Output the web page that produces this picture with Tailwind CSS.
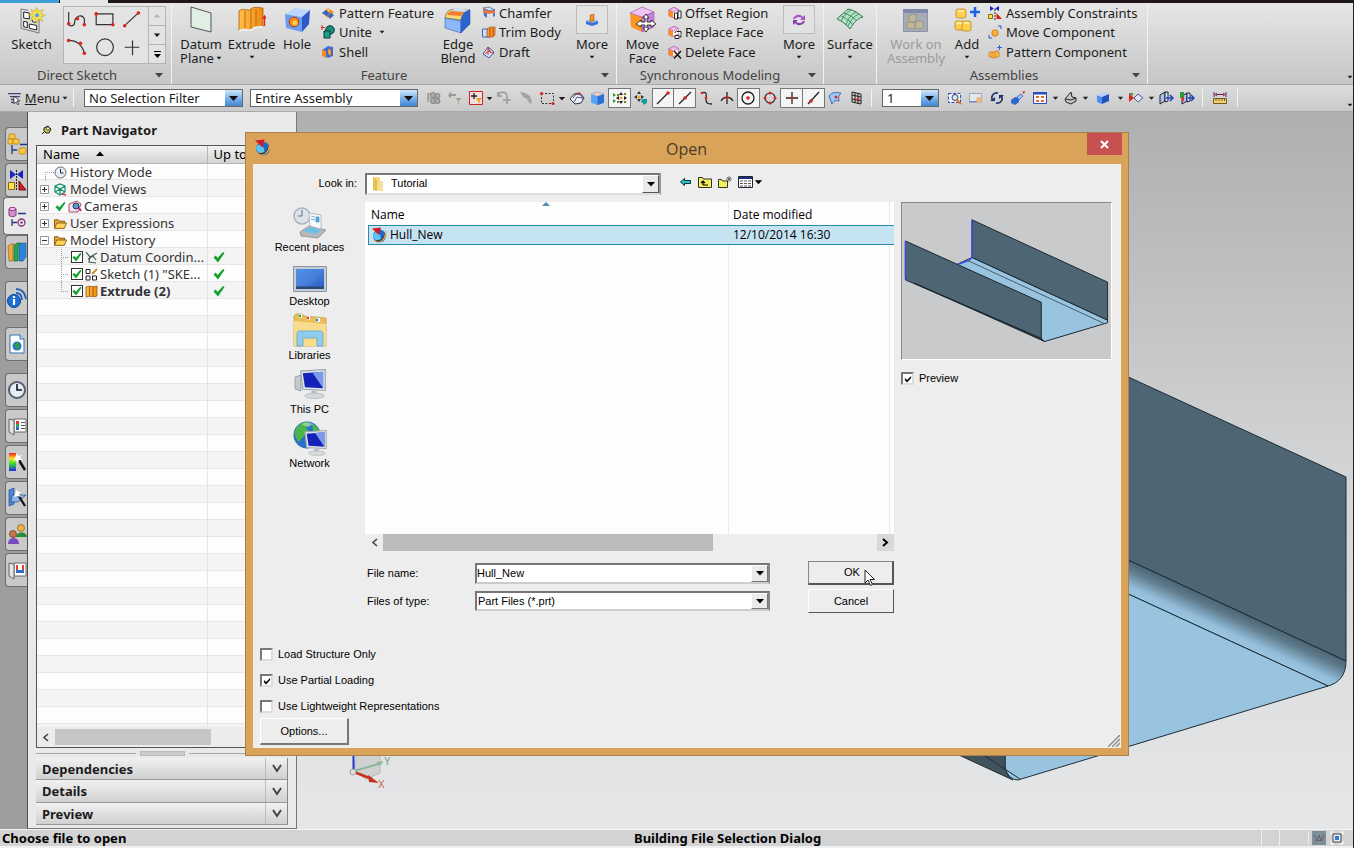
<!DOCTYPE html>
<html lang="en">
<head>
<meta charset="utf-8">
<title>Open</title>
<script src="https://cdn.jsdelivr.net/npm/@tailwindcss/browser@4"></script>
</head>
<body class="font-['Noto_Sans','Open_Sans',sans-serif] text-[13px] leading-[14px] text-[#1c1c1c]">
<svg class="absolute h-0 w-0" aria-hidden="true">
  <linearGradient id="gOrange" x1="0" x2="1"><stop offset="0" stop-color="#ffc04a"/><stop offset="1" stop-color="#f08a10"/></linearGradient>
  <linearGradient id="gBlue" x1="0" x2="1" y2="1"><stop offset="0" stop-color="#6fa8f2"/><stop offset="1" stop-color="#2458c4"/></linearGradient>
  <linearGradient id="gRain" x1="0" x2="0" y1="0" y2="1"><stop offset="0" stop-color="#e22"/><stop offset=".3" stop-color="#fd2"/><stop offset=".6" stop-color="#3d3"/><stop offset="1" stop-color="#22d"/></linearGradient>
  <linearGradient id="gArrow" x1="0" x2="0" y1="0" y2="1"><stop offset="0" stop-color="#cfe6fb"/><stop offset=".5" stop-color="#7db4ea"/><stop offset="1" stop-color="#3f86d2"/></linearGradient>
  <symbol id="down" viewBox="0 0 10 6"><path d="M1 1h8L5 5.500z" fill="currentColor"/></symbol>
  <symbol id="tick" viewBox="0 0 12 12"><path d="M.5 6.500 2.800 4.600 4.600 7 10 1 11.500 2 5 11.500z" fill="#12a12c"/></symbol>
  <symbol id="tickBlack" viewBox="0 0 9 9"><path d="M1 3.500v2.500l2.500 2.500L8 3.500V1L3.500 5.700z" fill="#000"/></symbol>
  <symbol id="folder" viewBox="0 0 14 13"><path d="M.5 11.500V2.500h4l1.500 1.500h5.500v2" fill="#e9a92c" stroke="#7a5310"/><path d="M.5 11.800 3 6h10.600l-2.600 5.800z" fill="#ffd35c" stroke="#8a5d10"/></symbol>
  <symbol id="nx" viewBox="0 0 17 17"><circle cx="8.500" cy="9" r="6.500" fill="#2068c8"/><path d="M2 8c2-4 5-4 7 0l1 5C5 14 2 12 2 8z" fill="#5cc6f2"/><path d="M2 12.500c6 2 12-1 13-9.500 2 6-2 12-8 12.500-2 0-4-1-5-3z" fill="#f0a62a"/><path d="M4 13c5 1 8-2 9.500-6 0 5-4 8-8 7.500z" fill="#173a78"/><path d="M1 1.500 10 .5 8 8z" fill="#d11b25"/></symbol>
  <symbol id="cube" viewBox="0 0 14 14"><path d="M1 4 6 6v7L1 11z" fill="#4f8ef0"/><path d="M1 4 8 1l5 2-7 3z" fill="#b5d5ff"/><path d="M6 6l7-3v7l-7 3z" fill="#2452bd"/></symbol>
  <symbol id="face" viewBox="0 0 14 14"><path d="M1 4 7 1l5 2.500V10l-6 3-5-2z" fill="#fff" stroke="#b0459b" stroke-width=".8"/><path d="M1 4l5 2.500V13L1 11z" fill="#ff8c1a"/><path d="M1 4 7 1l5 2.500-6 3z" fill="#f1c0ee" stroke="#b0459b" stroke-width=".6"/></symbol>
  <symbol id="monitor" viewBox="1 0 24 28"><path d="M1 2 24 .5v19.500L3 19z" fill="#dfe5ea" stroke="#9aa3ab"/><path d="M3 4 22 2.500v15.500L5 17z" fill="#1422b8"/><path d="M12 3.300l10-.8v15.500z" fill="#7d9bec"/><path d="M11 20h5v4h-5z" fill="#b9c0c6"/><ellipse cx="14" cy="25" rx="9" ry="2.500" fill="#d5dadd" stroke="#a7adb2" stroke-width=".6"/></symbol>
</svg>

<div class="flex h-screen min-h-[600px] w-full flex-col overflow-hidden border-r border-[#222] bg-[#d6d6d6]">
  <div class="flex h-[3px] shrink-0 bg-[#1d1718]"><span class="w-[59px] bg-[#3d9fd3]"></span><span class="w-px bg-black"></span><span class="w-[48px] bg-[#e6e6e6]"></span></div>

  <!-- Ribbon -->
  <header class="flex h-[81px] shrink-0 bg-linear-to-b from-[#e6e6e6] to-[#c6c6c6]">
    <section class="flex w-[171px] shrink-0 flex-col">
      <div class="flex h-[64px]">
        <button class="flex w-[63px] flex-col items-center gap-[3px] pt-[3px]">
          <svg class="h-7 w-[28px]" viewBox="0 0 84 84"><path d="M9 9 31 13M9 9v58l54 14V36" fill="none" stroke="#777" stroke-width="3"/><path d="M17 18l17 3v18l-17-3zM43 34l12 2v13l-12-2zM17 46l11 2v17l-11-3zM34 54l22 4v14l-22-5z" fill="#fff" stroke="#222" stroke-width="3"/><path d="M56 4l5 13 14-6-6 13 13 4-13 5 5 13-13-7-6 13-4-13-14 5 7-13-13-4 13-5-6-12 13 6z" fill="#f8e04a" stroke="#b89c18" stroke-width="1.500"/><circle cx="57" cy="28" r="6" fill="#4aa0ff"/></svg>
          <span>Sketch</span>
        </button>
        <div class="mt-[3px] flex h-[58px] w-[103px] border border-[#b4b4b4] bg-[#e3e3e3]">
          <svg class="h-[56px] w-[84px]" viewBox="0 0 84 57" fill="none" stroke="#333" stroke-width="1.200">
            <path d="M4 5v12c0 3 6 3 6-1 0-6 7-10 10-4v6"/><path d="M32 7h17v11H32z"/><path d="M62 18 75 6"/><path d="M4 34c9 0 14 6 16 13"/><circle cx="41" cy="41" r="8.500"/><path d="M69 34v15M61 41h15"/>
            <g fill="#e0231a" stroke="none"><circle cx="4" cy="17" r="1.800"/><circle cx="13" cy="12" r="1.800"/><circle cx="20" cy="18" r="1.800"/><circle cx="32" cy="7" r="1.800"/><circle cx="49" cy="18" r="1.800"/><circle cx="61" cy="19" r="1.800"/><circle cx="75" cy="6" r="1.800"/><circle cx="4" cy="34" r="1.800"/><circle cx="16" cy="37" r="1.800"/><circle cx="20" cy="47" r="1.800"/></g>
          </svg>
          <div class="flex flex-1 flex-col divide-y divide-[#b4b4b4] border-l border-[#b4b4b4]">
            <button class="grid flex-1 place-items-center text-[#b5b5b5]" aria-label="Up"><svg class="h-[6px] w-[8px] rotate-180"><use href="#down"/></svg></button>
            <button class="grid flex-1 place-items-center" aria-label="Down"><svg class="h-[6px] w-[8px]"><use href="#down"/></svg></button>
            <button class="grid flex-1 place-items-center" aria-label="More curves"><svg class="h-[9px] w-[9px]" viewBox="0 0 9 9"><path d="M1 1.500h7" stroke="#000"/><path d="M1 4h7L4.500 8z" fill="#000"/></svg></button>
          </div>
        </div>
      </div>
      <div class="flex h-4 items-center text-[#444]"><span class="flex-1 text-center">Direct Sketch</span><svg class="mr-[7px] h-[6px] w-[10px]"><use href="#down"/></svg></div>
    </section>
    <section class="flex w-[445px] shrink-0 flex-col border-l border-[#f2f2f2]">
      <div class="flex h-[64px]">
        <button class="flex w-[58px] flex-col items-center gap-[3px] pt-[3px]">
          <svg class="h-7 w-7" viewBox="0 0 28 28"><path d="M4 1 24 7v19L4 21z" fill="#e0efe4" stroke="#555"/></svg>
          <span class="flex flex-col items-center"><span>Datum</span><span class="flex items-center gap-[2px]">Plane<svg class="h-[4px] w-[6px]"><use href="#down"/></svg></span></span>
        </button>
        <button class="flex w-[43px] flex-col items-center gap-[3px] pt-[3px]">
          <svg class="h-7 w-[28px]" viewBox="0 0 28 28"><path d="M1 5c4-4 9 1 12-2s8-1 12-1v19c-4 0-8 0-10 2s-9-1-14 2z" fill="url(#gOrange)" stroke="#a85c08" stroke-width=".8"/><path d="M7 5v17M13 3v20M18 3v18" stroke="#b96a10" stroke-width="1" fill="none"/><path d="M1 25c5-3 11 1 14-2s6-2 10-2" stroke="#eee" stroke-width="2" fill="none"/><path d="M26.500 20V11M24.500 13l2-3 2 3" stroke="#d22" stroke-width="1.300" fill="none"/></svg>
          <span>Extrude</span><svg class="mt-[1px] h-[4px] w-[6px]"><use href="#down"/></svg>
        </button>
        <button class="flex w-[48px] flex-col items-center gap-[3px] pt-[3px]">
          <svg class="h-7 w-7" viewBox="0 0 28 28"><path d="M2 8 19 11v15L3 22z" fill="#6a9bf2"/><path d="M2 8 12 2l15 2-8 7z" fill="#bcd6ff"/><path d="M19 11l8-7-1 14-7 8z" fill="#3058c8"/><circle cx="11" cy="16" r="4.800" fill="#ff8a1a" stroke="#b23a10"/><circle cx="12" cy="17" r="2.500" fill="#ffd24a"/></svg>
          <span>Hole</span>
        </button>
        <div class="flex w-[114px] flex-col whitespace-nowrap">
          <button class="flex h-[19px] items-center gap-1"><svg class="h-[14px] w-[14px]" viewBox="0 0 14 14"><path d="M1 7l6-5 6 4-6 6z" fill="#f48b1d"/><path d="M1 7l4-3 4 3-3 3zM7 10l3-3 3 2-4 4z" fill="#2f66d0"/><path d="M6 2l3 1-2 4z" fill="#ffcb52"/></svg>Pattern Feature</button>
          <button class="flex h-5 items-center gap-1"><svg class="h-[14px] w-[14px]" viewBox="0 0 14 14"><circle cx="9" cy="5" r="4.300" fill="#159080" stroke="#0a3a36"/><path d="M3 6h6v7H3z" fill="#1aa08d" stroke="#0a3a36"/><path d="M1 0v5M0 2.500h4" stroke="#d22"/></svg>Unite<svg class="ml-[3px] h-[4px] w-[6px]"><use href="#down"/></svg></button>
          <button class="flex h-[19px] items-center gap-1"><svg class="h-[14px] w-[14px]" viewBox="0 0 14 14"><path d="M1 5l6-4 5 1v9l-5 2-6-3z" fill="#3c70dd"/><path d="M1 5l4 1v7l-4-2z" fill="#f48b1d"/><path d="M7 3l3 2v6l-3-2z" fill="#ffb23b" stroke="#8a3d08" stroke-width=".5"/></svg>Shell</button>
        </div>
        <button class="flex w-[46px] flex-col items-center gap-[3px] pt-[3px]">
          <svg class="h-7 w-7" viewBox="0 0 28 28"><path d="M1 12c1-7 4-8 10-9l15 1c-5 1-8 4-9 10z" fill="#ffd978" stroke="#333" stroke-width=".5"/><path d="M3 9c1-3 4-4 8-5l13 1c-4 1-6 3-7 5z" fill="#f08035"/><path d="M11 2l15 2-3 2-15-1z" fill="#cfe0ff"/><path d="M1 12l16 3v12L1 22z" fill="#8ab8f8" stroke="#264a9c" stroke-width=".5"/><path d="M17 15c1-7 4-10 9-11v14l-9 9z" fill="#2c65d0" stroke="#264a9c" stroke-width=".5"/></svg>
          <span class="text-center">Edge<br>Blend</span>
        </button>
        <div class="flex w-[90px] flex-col pl-px whitespace-nowrap">
          <button class="flex h-[19px] items-center gap-[3px]"><svg class="h-[14px] w-[14px]" viewBox="0 0 14 14"><path d="M1 3l6-2 6 3v6l-2 1V7L5 6v6l-3-2z" fill="#4979d8"/><path d="M1 3l6 2 6-1v3L6 8 1 6z" fill="#f07a3a"/><path d="M1 2l6-1 6 3-6 1z" fill="#cddffc" stroke="#335" stroke-width=".5"/></svg>Chamfer</button>
          <button class="flex h-5 items-center gap-[3px]"><svg class="h-[14px] w-[14px]" viewBox="0 0 14 14"><path d="M.5 4h7v8h-7z" fill="#cfe0fb" stroke="#3b64c0"/><path d="M5 4l3-2h5v8l-2 2H5z" fill="#f6a22e" stroke="#a8480e" stroke-width=".7"/><path d="M8 3v9M11 3v8" stroke="#c03a20"/></svg>Trim Body</button>
          <button class="flex h-[19px] items-center gap-[3px]"><svg class="h-[14px] w-[14px]" viewBox="0 0 14 14"><path d="M1 9l5-7 6 5-5 6z" fill="#dfe7fb" stroke="#3b55a8"/><path d="M6 2v8M3 9l4-3 5 3M6 3l3 5" stroke="#c8322b" fill="none"/></svg>Draft</button>
        </div>
        <button class="flex w-[42px] flex-col items-center gap-[3px] pt-[2px]">
          <span class="grid h-[29px] w-[32px] place-items-center border border-[#bdbdbd] bg-[#e2e2e2]"><svg class="h-[14px] w-[14px]" viewBox="0 0 14 14"><path d="M1 8l6-2 6 2v3l-6 2-6-2z" fill="#3a6fd8"/><path d="M1 8l6-2 6 2-6 2z" fill="#9cc4ff"/><path d="M5 2l4-1v7l-4 1z" fill="#f09224" stroke="#9c4f08" stroke-width=".5"/></svg></span>
          <span>More</span><svg class="mt-[1px] h-[4px] w-[6px]"><use href="#down"/></svg>
        </button>
      </div>
      <div class="flex h-4 items-center text-[#444]"><span class="flex-1 pr-1 text-center">Feature</span><svg class="mr-[6px] h-[6px] w-[10px]"><use href="#down"/></svg></div>
    </section>
    <section class="flex w-[207px] shrink-0 flex-col border-l border-[#f2f2f2]">
      <div class="flex h-[64px]">
        <button class="flex w-[51px] flex-col items-center gap-[3px] pt-[3px]">
          <svg class="h-7 w-7" viewBox="0 0 28 28"><path d="M1 7l12 4v15L2 21z" fill="#ff9624"/><path d="M1 7 13 1l12 5-12 5z" fill="#f0c4f2" stroke="#a04aa6" stroke-width=".6"/><path d="M13 11l12-5v15l-12 5z" fill="#c583dd" stroke="#8a3b9c" stroke-width=".5"/><path d="M17 8l3 4h-2v4h4v-2l5 4-5 3v-2h-4v3h2l-3 4-3-4h2v-3h-4v2l-5-3 5-4v2h4v-4h-2z" fill="#fff" stroke="#222" stroke-width=".9"/></svg>
          <span class="text-center">Move<br>Face</span>
        </button>
        <div class="flex w-[110px] flex-col whitespace-nowrap">
          <button class="flex h-[19px] items-center gap-[3px]"><svg class="h-[14px] w-[14px]" viewBox="0 0 14 14"><use href="#face" width="12" height="13"/><path d="M6.500 7v6h3V7zM10 5v7h3V5z" fill="#fff" stroke="#111" stroke-width=".9"/></svg>Offset Region</button>
          <button class="flex h-5 items-center gap-[3px]"><svg class="h-[14px] w-[14px]" viewBox="0 0 14 14"><use href="#face" width="12" height="13"/><path d="M7 10.500h4v3H7zM9 6.500h4v3M7 8c0-2 2-2 2-2M13 10v2h-1" fill="#fff" stroke="#111" stroke-width=".9"/></svg>Replace Face</button>
          <button class="flex h-[19px] items-center gap-[3px]"><svg class="h-[14px] w-[14px]" viewBox="0 0 14 14"><use href="#face" width="12" height="13"/><path d="M6 6l7 7.500M13 6l-7 7.500" stroke="#111" stroke-width="1.400"/></svg>Delete Face</button>
        </div>
        <button class="flex w-[42px] flex-col items-center gap-[3px] pt-[2px]">
          <span class="grid h-[29px] w-[32px] place-items-center border border-[#bdbdbd] bg-[#e2e2e2]"><svg class="h-[14px] w-[14px]" viewBox="0 0 14 14"><path d="M1 6c1-4 7-6 10-2l2-2v5H8l2-2C7 3 4 4 3 6z" fill="#a553c8"/><path d="M13 8c-1 4-7 6-10 2l-2 2V7h5L4 9c3 2 6 1 7-1z" fill="#8a3bb0"/></svg></span>
          <span>More</span><svg class="mt-[1px] h-[4px] w-[6px]"><use href="#down"/></svg>
        </button>
      </div>
      <div class="flex h-4 items-center text-[#444]"><span class="flex-1 whitespace-nowrap pr-1 text-center">Synchronous Modeling</span><svg class="mr-[6px] h-[6px] w-[10px]"><use href="#down"/></svg></div>
    </section>
    <section class="flex w-[53px] shrink-0 flex-col items-center border-l border-[#f2f2f2]">
      <button class="flex flex-col items-center gap-[3px] pt-[3px]">
        <svg class="h-7 w-7" viewBox="0 0 28 28"><path d="M1 13C5 9 9 6 12 3c6 1 10 4 15 8-5 1-9 5-13 12-3-4-8-8-13-10z" fill="#b4e2c6" stroke="#2b7a50"/><path d="M5 10c5 2 9 5 12 9M8 7c5 2 9 4 13 8M15 4C9 8 8 10 5 15M20 6c-5 3-8 6-10 13M23 8c-5 2-8 6-11 12" fill="none" stroke="#2b7a50" stroke-width=".8"/></svg>
        <span>Surface</span><svg class="mt-[1px] h-[4px] w-[6px]"><use href="#down"/></svg>
      </button>
    </section>
    <section class="flex w-[272px] shrink-0 flex-col border-x border-[#f2f2f2]">
      <div class="flex h-[64px]">
        <button class="flex w-[78px] flex-col items-center gap-[3px] pt-[3px] text-[#9a9a9a]">
          <svg class="h-7 w-[28px]" viewBox="0 0 28 28"><path d="M1.500 3.500h24v22h-24z" fill="#a7abb5" stroke="#8d94a6"/><path d="M1 3h25v4H1z" fill="#7e8aa8"/><path d="M7 10l4-2 3 1v6l-4 1-3-1zM5 17l4-1 4 1v5l-4 1-4-1zM13 16l4-1 4 1v6l-4 1-4-1z" fill="#c0b898" stroke="#8a8672" stroke-width=".6"/></svg>
          <span class="text-center">Work on<br>Assembly</span>
        </button>
        <button class="flex w-[24px] flex-col items-center gap-[3px] pt-[3px]">
          <svg class="h-7 w-7" viewBox="0 0 28 28"><g fill="#ffcf4f" stroke="#b97c10" stroke-width=".7"><rect x="3" y="3" width="10" height="9" rx="2"/><rect x="2" y="15" width="9" height="9" rx="2"/><rect x="9" y="15" width="9" height="10" rx="2"/></g><path d="M5 5h6M4 17h5M11 17h5" stroke="#fff3b8" stroke-width="1.500"/><path d="M22 1v10M17 6h10" stroke="#1c63e0" stroke-width="2.600"/></svg>
          <span>Add</span><svg class="mt-[1px] h-[4px] w-[6px]"><use href="#down"/></svg>
        </button>
        <div class="flex flex-1 flex-col whitespace-nowrap pl-[9px]">
          <button class="flex h-[19px] items-center gap-1"><svg class="h-[14px] w-[14px]" viewBox="0 0 14 14"><path d="M2 0v5l4-2.500zM11 0v5L7 2.500z" fill="#1426c8"/><path d="M7 3v11" stroke="#222" stroke-dasharray="2 1"/><path d="M.5 8.500h4v4h-4z" fill="#ffe04a" stroke="#86680c"/><path d="M8.500 7v6H14z" fill="#d81f1f"/></svg>Assembly Constraints</button>
          <button class="flex h-5 items-center gap-1"><svg class="h-[14px] w-[14px]" viewBox="0 0 14 14"><rect x="4" y="5" width="6" height="6" rx="2" fill="#ffae3d" stroke="#b36b10" stroke-width=".7"/><path d="M10 1h3v3M1 10v3h3" stroke="#2c55c8" fill="none"/></svg>Move Component</button>
          <button class="flex h-[19px] items-center gap-1"><svg class="h-[14px] w-[14px]" viewBox="0 0 14 14"><g fill="#ffb83d" stroke="#b36b10" stroke-width=".6"><rect x="1" y="7" width="4" height="5" rx="1"/><rect x="4" y="7" width="4" height="6" rx="1"/><rect x="7" y="6" width="4" height="6" rx="1"/></g><path d="M11.500 0v5M9 2.500h5" stroke="#2c63d0"/></svg>Pattern Component</button>
        </div>
      </div>
      <div class="flex h-4 items-center text-[#444]"><span class="flex-1 text-center">Assemblies</span><svg class="mr-[6px] h-[6px] w-[10px]"><use href="#down"/></svg></div>
    </section>
    <div class="flex flex-1 items-end justify-end pb-[5px]"><svg class="h-[4px] w-[6px]"><use href="#down"/></svg></div>
  </header>

  <!-- Selection bar -->
  <nav class="flex h-[28px] shrink-0 items-center border-y border-y-[#aaa] bg-linear-to-b from-[#dcdcdc] to-[#cacaca] pl-2">
    <button class="flex w-[60px] items-center gap-[4px]"><svg class="h-[13px] w-[13px]" viewBox="0 0 13 13"><path d="M0 1.500h13M2 4.500h10M3 7.500h3M3 10.500h3" stroke="#3b4a78" stroke-width="1.300"/><path d="M6 4v8l2-2 2 3 1-1-2-3h3z" fill="#fff" stroke="#222" stroke-width=".8"/></svg><span><u>M</u>enu</span><svg class="-ml-[2px] h-[4px] w-[6px]"><use href="#down"/></svg></button>
    <span class="ml-[5px] h-[18px] w-px bg-[#f4f4f4]"></span>
    <label class="ml-[10px] flex h-[18px] w-[159px] border border-[#666] bg-white"><select aria-label="Selection filter" class="min-w-0 flex-1 appearance-none bg-white pl-1 outline-none"><option>No Selection Filter</option></select><svg class="h-4 w-[17px]" viewBox="0 0 17 16"><path d="M0 0h17v16H0z" fill="url(#gArrow)"/><path d="M4 6h9l-4.500 5z" fill="#111"/></svg></label>
    <label class="ml-[7px] flex h-[18px] w-[168px] border border-[#666] bg-white"><select aria-label="Selection scope" class="min-w-0 flex-1 appearance-none bg-white pl-1 outline-none"><option>Entire Assembly</option></select><svg class="h-4 w-[17px]" viewBox="0 0 17 16"><path d="M0 0h17v16H0z" fill="url(#gArrow)"/><path d="M4 6h9l-4.500 5z" fill="#111"/></svg></label>
    <div class="ml-1 flex items-center">
      <button class="grid w-[22px] place-items-center" aria-label="Type filter"><svg class="h-4 w-4" viewBox="0 0 16 16" fill="#b0aea8" stroke="#8d8d8d" stroke-width="1.200"><path d="M3 3v9M3 8h3M3 4h3"/><circle cx="8" cy="5" r="2.500"/><circle cx="12.500" cy="6" r="2.300"/><circle cx="8" cy="11" r="2.500"/><circle cx="12.500" cy="11" r="2.300"/></svg></button>
      <button class="grid w-[22px] place-items-center" aria-label="Reset filter"><svg class="h-4 w-4" viewBox="0 0 16 16"><path d="M3 2 1 6l3 2V6h5V4H5z" fill="#999"/><path d="M8 8h7l-3 3v4l-1-1v-3z" fill="#a9a494"/></svg></button>
      <button class="grid w-[20px] place-items-center" aria-label="Snap filter"><svg class="h-4 w-4" viewBox="0 0 16 16"><path d="M1.500 1.500h13v13h-13z" fill="#f3dede" stroke="#c22"/><path d="M6 3v6M3 6h6" stroke="#222" stroke-width="1.300"/><path d="M8 8h6l-2.500 3v3L10 12v-1z" fill="#f39a1d"/></svg></button>
      <svg class="h-[5px] w-[7px]"><use href="#down"/></svg>
      <button class="grid w-[22px] place-items-center" aria-label="Undo selection"><svg class="h-4 w-4" viewBox="0 0 16 16" fill="none" stroke="#999" stroke-width="1.500"><path d="M2 6c1-5 8-5 9 0M2 2v4h4M11 6v8M7 10h8"/></svg></button>
      <button class="grid w-[22px] place-items-center" aria-label="Deselect"><svg class="h-4 w-4" viewBox="0 0 16 16"><path d="M2 2l5 1 5 3 2 6-2 2-3-5-4-2z" fill="#a3a3a3"/></svg></button>
      <button class="grid w-[20px] place-items-center" aria-label="Rectangle select"><svg class="h-4 w-4" viewBox="0 0 16 16"><path d="M2.500 3.500h12v10h-12z" fill="none" stroke="#333" stroke-dasharray="2 1.500"/><g fill="#d22"><circle cx="2.500" cy="3.500" r="1.600"/><circle cx="14" cy="13.500" r="1.600"/></g></svg></button>
      <svg class="h-[5px] w-[10px] px-px"><use href="#down"/></svg>
    </div>
    <div class="flex w-[299px] items-center">
      <button class="grid flex-1 place-items-center" aria-label="Shaded"><svg class="h-4 w-4" viewBox="0 0 16 16"><path d="M1 9 5 4l6-1 4 5-3 5-6 1z" fill="#e8eefb" stroke="#334"/><path d="M4 8l3-4 5 1 2 4M5 12l3-5 5 1" fill="none" stroke="#446" stroke-width=".9"/><path d="M6 5l3-2 3 1" stroke="#c33" fill="none"/></svg></button>
      <button class="grid flex-1 place-items-center" aria-label="Solid"><svg class="h-[15px] w-[15px]" viewBox="0 0 14 14"><path d="M1 3l6-2 6 2v8l-6 2-6-2z" fill="#5aa4f4"/><path d="M1 3l6-2 6 2-6 2z" fill="#f4cfc0" stroke="#8899bb" stroke-width=".5"/><path d="M7 5l6-2v8l-6 2z" fill="#2a6fd4"/></svg></button>
      <button class="grid h-5 flex-1 place-items-center border border-[#777] bg-[#f4f4f4]" aria-label="Enable snap"><svg class="h-4 w-4" viewBox="0 0 16 16"><path d="M1 3l3 2-3 2zM1 9l3 2-3 2z" fill="#2a9a3a"/><path d="M9 2l2 3H7zM9 14l2-3H7zM15 8l-3 2V6zM4 8l3-2v4z" fill="#222"/><circle cx="9" cy="8" r="1.500" fill="#e8b020"/><path d="M5 4h2v2H5zM12 3h2v2h-2zM12 11h2v2h-2zM5 11h2v2H5z" fill="#8a7a20"/></svg></button>
      <button class="grid flex-1 place-items-center" aria-label="Snap options"><svg class="h-4 w-4" viewBox="0 0 16 16"><path d="M6 1l2 3H4zM6 12l2-3H4zM11 7L8 9V5zM1 7l3-2v4z" fill="#333"/><circle cx="6" cy="7" r="1.500" fill="#e8b020"/><path d="M9 9h5v4l-4 2 0-2-2-1z" fill="#1a9a94"/></svg></button>
      <button class="grid h-5 flex-1 place-items-center border border-[#777] bg-[#f4f4f4]" aria-label="End point"><svg class="h-4 w-4" viewBox="0 0 16 16"><path d="M2 14 13 3" stroke="#222" stroke-width="1.300"/><circle cx="13" cy="3" r="1.800" fill="#d22"/></svg></button>
      <button class="grid h-5 flex-1 place-items-center border border-l-0 border-[#777] bg-[#f4f4f4]" aria-label="Mid point"><svg class="h-4 w-4" viewBox="0 0 16 16"><path d="M2 14 14 2" stroke="#222" stroke-width="1.300"/><circle cx="8" cy="8" r="1.800" fill="#d22"/></svg></button>
      <button class="grid flex-1 place-items-center" aria-label="Control point"><svg class="h-4 w-4" viewBox="0 0 16 16"><path d="M3 3c7-2 5 2 5 6s1 5 6 5" fill="none" stroke="#222" stroke-width="1.300"/><circle cx="4" cy="3" r="1.300" fill="#d22"/><circle cx="8" cy="8" r="1.300" fill="#d22"/></svg></button>
      <button class="grid flex-1 place-items-center" aria-label="Intersection"><svg class="h-4 w-4" viewBox="0 0 16 16"><path d="M8 2v12M2 11c3-5 9-5 12 0" fill="none" stroke="#222" stroke-width="1.300"/><circle cx="8" cy="7.500" r="1.600" fill="#d22"/></svg></button>
      <button class="grid h-5 flex-1 place-items-center border border-[#777] bg-[#f4f4f4]" aria-label="Arc center"><svg class="h-4 w-4" viewBox="0 0 16 16"><circle cx="8" cy="8" r="6" fill="none" stroke="#222" stroke-width="1.300"/><circle cx="8" cy="8" r="1.800" fill="#d22"/></svg></button>
      <button class="grid flex-1 place-items-center" aria-label="Quadrant"><svg class="h-4 w-4" viewBox="0 0 16 16"><circle cx="8" cy="8" r="5" fill="none" stroke="#333" stroke-width="1.200"/><g fill="#d22"><circle cx="8" cy="3" r="1.500"/><circle cx="8" cy="13" r="1.500"/><circle cx="3" cy="8" r="1.500"/><circle cx="13" cy="8" r="1.500"/></g></svg></button>
      <button class="grid h-5 flex-1 place-items-center border border-[#777] bg-[#f4f4f4]" aria-label="Existing point"><svg class="h-4 w-4" viewBox="0 0 16 16"><path d="M8 2v12M2 8h12" stroke="#222" stroke-width="1.300"/><circle cx="8" cy="8" r="1.300" fill="#d22"/></svg></button>
      <button class="grid h-5 flex-1 place-items-center border border-l-0 border-[#777] bg-[#f4f4f4]" aria-label="Point on curve"><svg class="h-4 w-4" viewBox="0 0 16 16"><path d="M3 14 14 2" stroke="#222" stroke-width="1.300"/><circle cx="6" cy="11" r="1.800" fill="#d22"/></svg></button>
      <button class="grid flex-1 place-items-center" aria-label="Point on surface"><svg class="h-4 w-4" viewBox="0 0 16 16"><path d="M2 6c3-4 7-4 12-3-2 2-3 4-2 8-4-1-5 0-7 3z" fill="#9cc8f4" stroke="#3a6ab0"/><circle cx="9" cy="7" r="1.500" fill="#d22"/></svg></button>
      <button class="grid flex-1 place-items-center" aria-label="Grid point"><svg class="h-4 w-4" viewBox="0 0 16 16"><path d="M4 2l9 2v10l-9-2zM7 3v10M10 3v11M4 5l9 2M4 9l9 2" fill="none" stroke="#222"/><circle cx="10" cy="9" r="1.500" fill="#d22"/></svg></button>
    </div>
    <span class="ml-[5px] h-[18px] w-px bg-[#f4f4f4]"></span>
    <label class="ml-[10px] flex h-[18px] w-[57px] border border-[#666] bg-white"><select aria-label="Layer" class="min-w-0 flex-1 appearance-none bg-white pl-1 outline-none"><option>1</option></select><svg class="h-4 w-[17px]" viewBox="0 0 17 16"><path d="M0 0h17v16H0z" fill="url(#gArrow)"/><path d="M4 6h9l-4.500 5z" fill="#111"/></svg></label>
    <div class="ml-[5px] flex items-center">
      <button class="grid w-[21px] place-items-center" aria-label="Fit"><svg class="h-4 w-4" viewBox="0 0 16 16"><path d="M1.500 3.500h12v9h-12z" fill="#eef3fb" stroke="#2a4cc0" stroke-dasharray="3 1.500"/><circle cx="8" cy="7.500" r="3" fill="#cfe4ff" stroke="#444"/><path d="M10 10l4 4" stroke="#e07a20" stroke-width="2"/></svg></button>
      <button class="grid w-[21px] place-items-center" aria-label="Zoom"><svg class="h-4 w-4" viewBox="0 0 16 16"><path d="M1.500 3.500h12v8h-12z" fill="#e3e8ef" stroke="#9aa6c0"/><path d="M1 12h12" stroke="#5a78c0"/><circle cx="11" cy="10" r="3" fill="#e8b880"/></svg></button>
      <button class="grid w-[21px] place-items-center" aria-label="Rotate"><svg class="h-4 w-4" viewBox="0 0 16 16" fill="none" stroke="#1f356f" stroke-width="1.600"><path d="M9 3C4 2 1 7 4 11M7 13c5 1 8-4 5-8"/><path d="M1 11h5v-4zM15 5h-5v4z" fill="#1f356f" stroke="none"/></svg></button>
      <button class="grid w-[21px] place-items-center" aria-label="Section"><svg class="h-4 w-4" viewBox="0 0 16 16"><path d="M1 10l4-3 4 1v4l-4 3-4-2z" fill="#2f66d0"/><path d="M7 7l4-3 2 2-4 4z" fill="#9cc4ff" stroke="#2a4cc0" stroke-width=".7"/><path d="M12 2l3-1-1 3z" fill="#d22"/></svg></button>
      <button class="grid w-[24px] place-items-center" aria-label="Orient view"><svg class="h-4 w-4" viewBox="0 0 16 16"><path d="M1.500 2.500h13v11h-13z" fill="#fff" stroke="#2a4cc0"/><path d="M1 2h14v2.500H1z" fill="#2a4cc0"/><path d="M4 6h3v2H4zM9 6h3v2H9zM4 10h3v2H4zM9 10h3v2H9z" fill="#e06a30"/></svg></button>
      <svg class="h-[4px] w-[7px]"><use href="#down"/></svg>
      <button class="grid w-[23px] place-items-center" aria-label="Wireframe"><svg class="h-4 w-4" viewBox="0 0 16 16"><path d="M2 9l6-7 1 5 4 1v3l-5 3-5-2z" fill="#c5c8cc" stroke="#222"/><path d="M3 9l5 1 5-2" fill="none" stroke="#222"/></svg></button>
      <svg class="h-[4px] w-[7px]"><use href="#down"/></svg>
      <button class="grid w-[28px] place-items-center" aria-label="Rendering"><svg class="h-[14px] w-[14px]"><use href="#cube"/></svg></button>
      <svg class="h-[4px] w-[7px]"><use href="#down"/></svg>
      <button class="grid w-[24px] place-items-center" aria-label="Show and hide"><svg class="h-4 w-4" viewBox="0 0 16 16"><path d="M1 3l5 5-5 4z" fill="#d22"/><path d="M1 3h4v3z" fill="#2a3"/><path d="M6 8l4-4 5 4-5 4z" fill="#dfe8f8" stroke="#4a5a88"/></svg></button>
      <svg class="h-[4px] w-[7px]"><use href="#down"/></svg>
      <button class="grid w-[22px] place-items-center" aria-label="Clip"><svg class="h-4 w-4" viewBox="0 0 16 16"><path d="M2 5l5-3v9l-5 3z" fill="#a9c4f0" stroke="#223"/><path d="M7 2h3v9l-3 1z" fill="#dbe6fa" stroke="#223"/><path d="M8 8h6M12 5l3 3-3 3" stroke="#1c3fc0" fill="none" stroke-width="1.500"/></svg></button>
      <button class="grid w-[20px] place-items-center" aria-label="Edit section"><svg class="h-4 w-4" viewBox="0 0 16 16"><path d="M3 6l5-3v8l-5 3z" fill="#a9c4f0" stroke="#223"/><path d="M8 3h3v8l-3 1z" fill="#dbe6fa" stroke="#223"/><path d="M1 2h4v5l-4 1z" fill="#2a9a3a"/><path d="M3 7h2v4H3z" fill="#d33"/><path d="M9 8h5M12 5l3 3-3 3" stroke="#1c3fc0" fill="none" stroke-width="1.500"/></svg></button>
    </div>
    <span class="ml-[5px] h-[18px] w-px bg-[#f4f4f4]"></span>
    <button class="grid w-[34px] place-items-center" aria-label="Measure distance"><svg class="h-4 w-4" viewBox="0 0 16 16"><path d="M2 2v5M14 2v5M3 4.500h10" stroke="#1c2fa0"/><path d="M2 4.500l3-2v4zM14 4.500l-3-2v4z" fill="#c33"/><path d="M1.500 8.500h13v5h-13z" fill="#f3d27a" stroke="#7a5a18"/><path d="M4 9v2M7 9v2M10 9v2M12.500 9v2" stroke="#7a5a18"/></svg></button>
    <span class="h-[18px] w-px bg-[#f4f4f4]"></span>
    <div class="flex flex-1 items-end justify-end self-stretch pb-1"><svg class="h-[4px] w-[6px]"><use href="#down"/></svg></div>
  </nav>

  <!-- Work area -->
  <main class="relative flex min-h-0 flex-1 bg-[#9c9c9c]">
    <aside class="flex w-[28px] shrink-0 flex-col gap-[2px] border-r border-[#4e4e4e] bg-[#9d9d9d] pl-[5px] pt-[15px]">
      <button class="grid h-[34px] place-items-center rounded-l-sm border border-r-0 border-[#6e6e6e] bg-[#c9c9c9]" aria-label="Assembly Navigator"><svg class="h-[22px] w-5" viewBox="0 0 20 22"><g fill="#ffc83c" stroke="#a87410" stroke-width=".7"><rect x="2" y="1" width="6" height="5" rx="1"/><rect x="1" y="6" width="5" height="5" rx="1"/><rect x="6" y="6" width="6" height="5" rx="1"/><rect x="12" y="15" width="7" height="6" rx="1.500"/></g><path d="M5 12v9M5 17h5M13 11.500h7" stroke="#223a80" stroke-width="1.300"/></svg></button>
      <button class="grid h-[34px] place-items-center rounded-l-sm border border-r-0 border-[#6e6e6e] bg-[#c9c9c9]" aria-label="Constraint Navigator"><svg class="h-[22px] w-5" viewBox="0 0 20 22"><path d="M3 1v9l6-4.500zM16 1v9l-6-4.500z" fill="#1624c4"/><path d="M9.500 1v20" stroke="#222" stroke-dasharray="2 1"/><path d="M1.500 13.500h6v7h-6z" fill="#ffe44c" stroke="#86680c"/><path d="M12 12v9h7z" fill="#d81f1f" stroke="#711"/></svg></button>
      <button class="-mt-[2px] -mr-px -ml-[2px] grid h-[38px] place-items-center rounded-l-sm border border-r-0 border-[#6e6e6e] bg-[#e9e9e9]" aria-label="Part Navigator"><svg class="h-[22px] w-5" viewBox="0 0 20 22"><path d="M3 4v6c0 2 7 2 7 0V4" fill="#d58fd0" stroke="#84307e"/><ellipse cx="6.500" cy="4" rx="3.500" ry="1.600" fill="#eec6ea" stroke="#84307e"/><path d="M12 8.500h8M6 14v7M6 17.500h5" stroke="#223a80" stroke-width="1.300"/><circle cx="15.500" cy="17.500" r="3.500" fill="none" stroke="#84307e" stroke-width="1.300"/><circle cx="15.500" cy="17.500" r="1.200" fill="#84307e"/></svg></button>
      <button class="-mt-[2px] grid h-[34px] place-items-center rounded-l-sm border border-r-0 border-[#6e6e6e] bg-[#c9c9c9]" aria-label="Reuse Library"><svg class="h-[22px] w-5" viewBox="0 0 20 22"><path d="M1 5l3-2h4L6 5v15H2z" fill="#f0a83a" stroke="#8a5a12" stroke-width=".6"/><path d="M7 5l3-3h4l-3 3v15H7z" fill="#23a85a" stroke="#0c5c2c" stroke-width=".6"/><path d="M12 5l3-3h4v14l-3 4h-4z" fill="#2c86d8" stroke="#134a86" stroke-width=".6"/></svg></button>
      <button class="mt-[10px] grid h-[34px] place-items-center rounded-l-sm border border-r-0 border-[#6e6e6e] bg-[#c9c9c9]" aria-label="HD3D Tools"><svg class="h-[22px] w-5" viewBox="0 0 20 22"><circle cx="7" cy="14" r="6.500" fill="#1c6fd6" stroke="#0d4794"/><path d="M7 12v6M7 9v2" stroke="#fff" stroke-width="2.200"/><path d="M9 6c4 0 6 3 6 7M9 2c6 0 9 4 10 10" stroke="#2b5fb4" stroke-width="1.800" fill="none"/></svg></button>
      <button class="mt-[10px] grid h-[34px] place-items-center rounded-l-sm border border-r-0 border-[#6e6e6e] bg-[#c9c9c9]" aria-label="Web Browser"><svg class="h-[22px] w-5" viewBox="0 0 20 22"><path d="M3 2h10l4 4v14H3z" fill="#fdfdfd" stroke="#3470b8"/><path d="M13 2v4h4" fill="#cfe0f4" stroke="#3470b8"/><circle cx="10" cy="13" r="4.500" fill="#2a72c8"/><path d="M7 11l4-2 2 4-3 4z" fill="#2ba24a"/></svg></button>
      <button class="mt-[10px] grid h-[34px] place-items-center rounded-l-sm border border-r-0 border-[#6e6e6e] bg-[#c9c9c9]" aria-label="History"><svg class="h-[22px] w-5" viewBox="0 0 20 22"><circle cx="10" cy="11" r="8" fill="#e6eef8" stroke="#555f70" stroke-width="2"/><path d="M10 5v6h5" stroke="#112" stroke-width="1.600" fill="none"/></svg></button>
      <button class="grid h-[34px] place-items-center rounded-l-sm border border-r-0 border-[#6e6e6e] bg-[#c9c9c9]" aria-label="System Materials"><svg class="h-[22px] w-5" viewBox="0 0 20 22"><path d="M7 4h12v13H7z" fill="#fff" stroke="#666"/><path d="M2 4l5 1v15l-5-3z" fill="#e4e4e4" stroke="#666"/><path d="M9 6h3v3H9z" fill="#d33"/><path d="M9 9h3v3H9z" fill="#2a5"/><path d="M9 12h3v3H9z" fill="#36c"/><path d="M14 7.500h4M14 10.500h4M14 13.500h4" stroke="#555"/></svg></button>
      <button class="grid h-[34px] place-items-center rounded-l-sm border border-r-0 border-[#6e6e6e] bg-[#c9c9c9]" aria-label="Process Studio"><svg class="h-[22px] w-5" viewBox="0 0 20 22"><path d="M2 2h7v18H2z" fill="url(#gRain)"/><path d="M10 6l8 13" stroke="#111" stroke-width="2.500"/><path d="M10 2l1 3 4-1-2 3 3 2h-4l-1 3-2-3-3 1 2-3z" fill="#fff"/></svg></button>
      <button class="grid h-[34px] place-items-center rounded-l-sm border border-r-0 border-[#6e6e6e] bg-[#c9c9c9]" aria-label="Manufacturing"><svg class="h-[22px] w-5" viewBox="0 0 20 22"><path d="M2 3l5-2v16l-5 2z" fill="#4a8ad8" stroke="#1c4e94" stroke-width=".7"/><path d="M5 8h14l-8 7H4z" fill="#8ab4ea" stroke="#1c4e94" stroke-width=".7"/><path d="M10 6l8 13" stroke="#111" stroke-width="2.300"/><path d="M10 2l1 3 3 0-2 2 2 3-4-1-3 1 1-3z" fill="#fff"/></svg></button>
      <button class="grid h-[34px] place-items-center rounded-l-sm border border-r-0 border-[#6e6e6e] bg-[#c9c9c9]" aria-label="Roles"><svg class="h-[22px] w-5" viewBox="0 0 20 22"><path d="M9 14c0-6 11-6 11 0z" fill="#2a8a3a"/><circle cx="14" cy="5" r="3.500" fill="#f2b04a" stroke="#8a5a12" stroke-width=".7"/><path d="M1 21c0-8 11-8 11 0z" fill="#7a4ac0"/><circle cx="6" cy="11" r="3.500" fill="#c8754a" stroke="#6a3412" stroke-width=".7"/></svg></button>
      <button class="grid h-[34px] place-items-center rounded-l-sm border border-r-0 border-[#6e6e6e] bg-[#c9c9c9]" aria-label="System Scenes"><svg class="h-[22px] w-5" viewBox="0 0 20 22"><path d="M7 4h12v13H7z" fill="#fff" stroke="#666"/><path d="M2 4l5 1v15l-5-3z" fill="#e4e4e4" stroke="#666"/><path d="M9 6h8v8H9z" fill="#e0402c"/><path d="M11 6h4v5l-2 3-2-3z" fill="#fff"/><path d="M9 11h8v3H9z" fill="#2f6cc8"/></svg></button>
    </aside>

    <section class="flex w-[269px] shrink-0 flex-col border-r border-b border-[#777] bg-[#e9e9e9] px-2">
      <h2 class="flex h-[33px] items-center gap-[9px] pl-[5px] pt-[2px] font-bold"><svg class="h-[10px] w-[11px]" viewBox="0 0 11 10"><path d="M1 9l3-3" stroke="#111"/><path d="M3 3l4-2 3 3-2 4-3 0-2-2z" fill="#c8c83a" stroke="#222"/><circle cx="7" cy="3.500" r="1.600" fill="#fff" stroke="#222" stroke-width=".7"/></svg>Part Navigator</h2>
      <div class="flex min-h-0 flex-1 flex-col border border-[#555] bg-white">
        <div class="min-h-0 flex-1 overflow-hidden bg-[repeating-linear-gradient(180deg,#fdfdfd_0px,#fdfdfd_16px,#e6e6e6_16px,#e6e6e6_17px,#f4f4f4_17px,#f4f4f4_33px,#e6e6e6_33px,#e6e6e6_34px)] bg-[position:0_17px]">
          <table class="h-full w-full table-fixed border-collapse leading-[17px] whitespace-nowrap text-[#333]">
            <thead><tr class="h-[17px] bg-linear-to-b from-[#f2f2f2] to-[#d4d4d4] text-left text-black">
              <th class="w-[170px] border-r border-b border-[#b5b5b5] p-0 pl-[6px] leading-4 font-normal"><span class="flex items-center gap-[15px]">Name<svg class="h-[6px] w-[10px] rotate-180"><use href="#down"/></svg></span></th>
              <th class="overflow-hidden border-b border-[#b5b5b5] p-0 pl-[6px] leading-4 font-normal">Up to Date</th></tr></thead>
            <tbody>
              <tr class="h-[17px]"><td class="border-r border-[#e4e4e4] p-0"><span class="flex h-[17px] items-center pl-[8px]"><svg class="h-[17px] w-[9px]" viewBox="0 0 9 17"><path d="M.5 17V8.500H9" fill="none" stroke="#999" stroke-dasharray="1 1"/></svg><svg class="mr-[3px] h-[13px] w-[13px]" viewBox="0 0 13 13"><circle cx="6.500" cy="6.500" r="5.500" fill="#e8eef6" stroke="#667"/><path d="M6.500 3v4h3" stroke="#223" fill="none"/></svg>History Mode</span></td><td></td></tr>
              <tr class="h-[17px]"><td class="border-r border-[#e4e4e4] p-0"><span class="flex h-[17px] items-center gap-[3px] pl-[3px]"><svg class="mr-[2px] h-[9px] w-[9px]" viewBox="0 0 9 9"><path d="M.5.5h8v8h-8z" fill="#fff" stroke="#999"/><path d="M2 4.500h5M4.500 2v5" stroke="#333"/></svg><svg class="h-[13px] w-[13px]" viewBox="0 0 13 13"><path d="M1 3l5-2 5 2v6l-5 3-5-3zM1 3l5 3 5-3M6 6v6M1 9l5-3 5 3" fill="none" stroke="#15936a" stroke-width="1.200"/><path d="M8 11l4 1" stroke="#d33" stroke-width="1.500"/></svg>Model Views</span></td><td></td></tr>
              <tr class="h-[17px]"><td class="border-r border-[#e4e4e4] p-0"><span class="flex h-[17px] items-center gap-[2px] pl-[3px]"><svg class="mr-[4px] h-[9px] w-[9px]" viewBox="0 0 9 9"><path d="M.5.5h8v8h-8z" fill="#fff" stroke="#999"/><path d="M2 4.500h5M4.500 2v5" stroke="#333"/></svg><svg class="h-[11px] w-[11px]"><use href="#tick"/></svg><svg class="h-[13px] w-[14px]" viewBox="0 0 14 13"><path d="M1 4l8-3 4 3-3 8H1z" fill="#f4e4ea" stroke="#b24a6a"/><circle cx="8" cy="6" r="3" fill="#5a9ad8" stroke="#334"/><path d="M11 8l2 3" stroke="#a3289a" stroke-width="2"/></svg>Cameras</span></td><td></td></tr>
              <tr class="h-[17px]"><td class="border-r border-[#e4e4e4] p-0"><span class="flex h-[17px] items-center gap-[3px] pl-[3px]"><svg class="mr-[2px] h-[9px] w-[9px]" viewBox="0 0 9 9"><path d="M.5.5h8v8h-8z" fill="#fff" stroke="#999"/><path d="M2 4.500h5M4.500 2v5" stroke="#333"/></svg><svg class="h-[13px] w-[13px]"><use href="#folder"/></svg>User Expressions</span></td><td></td></tr>
              <tr class="h-[17px]"><td class="border-r border-[#e4e4e4] p-0"><span class="flex h-[17px] items-center gap-[3px] pl-[3px]"><svg class="mr-[2px] h-[9px] w-[9px]" viewBox="0 0 9 9"><path d="M.5.5h8v8h-8z" fill="#fff" stroke="#999"/><path d="M2 4.500h5" stroke="#333"/></svg><svg class="h-[13px] w-[13px]"><use href="#folder"/></svg>Model History</span></td><td></td></tr>
              <tr class="h-[17px]"><td class="border-r border-[#e4e4e4] p-0"><span class="flex h-[17px] items-center gap-[2px] pl-[24px]"><svg class="h-[17px] w-[8px] shrink-0"><path d="M.5 0v17M0 8.500h8" stroke="#999" stroke-dasharray="1 1"/></svg><span class="grid shrink-0 place-items-center"><input type="checkbox" checked aria-label="Datum Coordinate System" class="col-start-1 row-start-1 h-[12px] w-[12px] appearance-none border border-[#333] bg-white"><svg class="pointer-events-none col-start-1 row-start-1 h-[10px] w-[10px]"><use href="#tick"/></svg></span><svg class="h-[13px] w-[13px] shrink-0" viewBox="0 0 13 13"><path d="M1 1l4 5 7-4M5 6l-1 5 7 1M3 8l5-3 3 4" fill="none" stroke="#3a5a50" stroke-width="1.200"/></svg><span>Datum Coordin...</span></span></td><td class="p-0 pl-[5px]"><svg class="h-[12px] w-[12px]"><use href="#tick"/></svg></td></tr>
              <tr class="h-[17px]"><td class="border-r border-[#e4e4e4] p-0"><span class="flex h-[17px] items-center gap-[2px] pl-[24px]"><svg class="h-[17px] w-[8px] shrink-0"><path d="M.5 0v17M0 8.500h8" stroke="#999" stroke-dasharray="1 1"/></svg><span class="grid shrink-0 place-items-center"><input type="checkbox" checked aria-label="Sketch (1)" class="col-start-1 row-start-1 h-[12px] w-[12px] appearance-none border border-[#333] bg-white"><svg class="pointer-events-none col-start-1 row-start-1 h-[10px] w-[10px]"><use href="#tick"/></svg></span><svg class="h-[13px] w-[13px] shrink-0" viewBox="0 0 13 13"><path d="M1 1.500h4v4H1zM1 8h4v4H1zM7.500 8h4v4h-4z" fill="#fff" stroke="#222"/><path d="M7 6l5-5" stroke="#d08a20" stroke-width="1.800"/></svg><span>Sketch (1) "SKE...</span></span></td><td class="p-0 pl-[5px]"><svg class="h-[12px] w-[12px]"><use href="#tick"/></svg></td></tr>
              <tr class="h-[17px]"><td class="border-r border-[#e4e4e4] p-0"><span class="flex h-[17px] items-center gap-[2px] pl-[24px] font-bold"><svg class="h-[17px] w-[8px] shrink-0"><path d="M.5 0v9M0 8.500h8" stroke="#999" stroke-dasharray="1 1"/></svg><span class="grid shrink-0 place-items-center"><input type="checkbox" checked aria-label="Extrude (2)" class="col-start-1 row-start-1 h-[12px] w-[12px] appearance-none border border-[#333] bg-white"><svg class="pointer-events-none col-start-1 row-start-1 h-[10px] w-[10px]"><use href="#tick"/></svg></span><svg class="h-[13px] w-[13px] shrink-0" viewBox="0 0 13 13"><path d="M1 2c4-2 7 1 11-1v10c-4 2-7-1-11 1z" fill="url(#gOrange)" stroke="#9a560a" stroke-width=".8"/><path d="M4.500 2v9M8 2v9" stroke="#9a560a" stroke-width=".9"/></svg><span>Extrude (2)</span></span></td><td class="p-0 pl-[5px]"><svg class="h-[12px] w-[12px]"><use href="#tick"/></svg></td></tr>
              <tr><td class="border-r border-[#e4e4e4] p-0"></td><td></td></tr>
            </tbody>
          </table>
        </div>
        <div class="flex h-[20px] items-center gap-[6px] bg-[#ececec] pl-[5px]"><svg class="h-[9px] w-[7px]" viewBox="0 0 7 9"><path d="M6 1 2 4.500 6 8" fill="none" stroke="#444" stroke-width="1.600"/></svg><span class="h-4 w-[156px] bg-[#c6c6c6]"></span></div>
      </div>
      <div class="flex h-[10px] items-center gap-1"><span class="h-px flex-1 bg-[#aaa]"></span><span class="h-[5px] w-[45px] border border-[#bbb] bg-[#ccc]"></span><span class="h-px flex-1 bg-[#aaa]"></span></div>
      <div class="mb-[3px] flex flex-col border-r border-[#888] font-bold">
        <button class="flex h-[22px] border-b border-[#999] bg-linear-to-b from-[#f1f1f1] to-[#d0d0d0] text-left"><span class="flex-1 self-center pl-[6px]">Dependencies</span><span class="grid w-[22px] place-items-center self-stretch border-l border-[#bbb]"><svg class="h-[9px] w-[10px]" viewBox="0 0 10 9"><path d="M1 1l4 6 4-6" fill="none" stroke="#444" stroke-width="2"/></svg></span></button>
        <button class="flex h-[23px] border-b border-[#999] bg-linear-to-b from-[#f1f1f1] to-[#d0d0d0] text-left"><span class="flex-1 self-center pl-[6px]">Details</span><span class="grid w-[22px] place-items-center self-stretch border-l border-[#bbb]"><svg class="h-[9px] w-[10px]" viewBox="0 0 10 9"><path d="M1 1l4 6 4-6" fill="none" stroke="#444" stroke-width="2"/></svg></span></button>
        <button class="flex h-[22px] border-b border-[#999] bg-linear-to-b from-[#f1f1f1] to-[#d0d0d0] text-left"><span class="flex-1 self-center pl-[6px]">Preview</span><span class="grid w-[22px] place-items-center self-stretch border-l border-[#bbb]"><svg class="h-[9px] w-[10px]" viewBox="0 0 10 9"><path d="M1 1l4 6 4-6" fill="none" stroke="#444" stroke-width="2"/></svg></span></button>
      </div>
    </section>

    <!-- Model canvas -->
    <section class="min-w-0 flex-1 bg-linear-to-b from-[#aeafb1] via-[#d3d4d6] to-[#e6e7e9]">
      <svg class="block h-full w-full" viewBox="297 112 1056 717" preserveAspectRatio="xMinYMin slice">
        <defs><linearGradient id="bend" gradientUnits="userSpaceOnUse" x1="1238" y1="611" x2="1226" y2="637"><stop offset="0" stop-color="#4e6573"/><stop offset=".3" stop-color="#5f7c8d"/><stop offset=".8" stop-color="#93bedb"/><stop offset="1" stop-color="#98c4e0"/></linearGradient></defs>
        <g stroke="#1d2c36" stroke-width="1" stroke-linejoin="round">
          <path d="M1100 364 1346 477V661L1100 547z" fill="#4e6573"/>
          <path d="M1100 547 1346 661c0 14-7 22-18 25L1100 581z" fill="url(#bend)"/>
          <path d="M1100 581 1328 686 1018 780c-8 0-13-8-13-14V600z" fill="#98c4e0"/>
          <path d="M900 728 1005 740v26c0 6 5 12 8 14L961 756z" fill="#42535e"/>
          <path d="M985 756 1020 779" fill="none"/>
        </g>
        <path d="M358 750l22 0v23l-14 6-12-8z" fill="#cfd1d3" stroke="#b5b7b9"/>
        <path d="M354 771l28-8" stroke="#8fb79b" stroke-width="2"/><path d="M377 762l7-1-6 5z" fill="#8fb79b"/>
        <path d="M353.500 745v26" stroke="#1a35c8" stroke-width="2"/>
        <path d="M354 772l18 7" stroke="#c8321f" stroke-width="2.500"/><path d="M368 775l11 8-10-1z" fill="#c8321f"/>
        <circle cx="353" cy="772" r="3" fill="#ddd" stroke="#888" stroke-width=".7"/>
        <text x="378" y="788" font-size="10" fill="#c85a50" font-family="Liberation Sans">X</text><text x="384" y="765" font-size="10" fill="#6aa57c" font-family="Liberation Sans">Y</text>
      </svg>
    </section>

    <!-- Open dialog, floating over the work area -->
    <form role="dialog" aria-label="Open" class="absolute top-[20px] left-[245px] flex h-[624px] w-[884px] flex-col border border-[#a9804a] bg-[#d9a45a] font-['Liberation_Sans',sans-serif] text-[11px] leading-[13px] text-black">
      <div class="flex h-[31px] shrink-0 items-start pr-[6px] pl-2">
        <svg class="mt-[6px] h-[18px] w-[18px]"><use href="#nx"/></svg>
        <h1 class="flex-1 self-center pl-[14px] text-center font-['Open_Sans','Noto_Sans',sans-serif] text-base text-[#4a3c26]">Open</h1>
        <button type="button" class="grid h-[22px] w-[35px] place-items-center bg-[#c75050]" aria-label="Close"><svg class="h-[9px] w-[9px]" viewBox="0 0 9 9"><path d="M1 1l7 7M8 1 1 8" stroke="#fff" stroke-width="2"/></svg></button>
      </div>
      <div class="mx-[7px] mb-[7px] flex min-h-0 flex-1 flex-col border border-[#f6f0e6] bg-[#ededed]">
        <div class="flex h-[37px] items-center">
          <label for="look" class="w-[103px] text-right">Look in:</label>
          <span class="ml-2 flex h-[22px] w-[296px] items-center border-2 border-t-[#777] border-r-[#999] border-b-[#ddd] border-l-[#777] bg-white pl-[3px]"><svg class="h-4 w-4" viewBox="0 0 16 16"><path d="M3 1h6l1 1v12H3z" fill="#f5d77a"/><path d="M3 1l4 3v11l-4-1z" fill="#e8bf52"/><path d="M9 5l4 0v10H8z" fill="#f3dfa0"/></svg>
            <select id="look" class="min-w-0 flex-1 appearance-none bg-transparent pl-[5px] outline-none"><option>Tutorial</option></select>
            <span class="grid h-[18px] w-[17px] place-items-center border border-t-white border-r-[#555] border-b-[#555] border-l-white bg-[#eaeaea]"><svg class="h-[6px] w-[10px]"><use href="#down"/></svg></span></span>
          <div class="ml-[18px] flex items-center gap-[6px] pb-1">
            <button type="button" aria-label="Back"><svg class="block h-[14px] w-[13px]" viewBox="0 0 13 14"><path d="M1.500 7l4-3.500v2h6v3h-6v2z" fill="#1fc4cc" stroke="#033"/></svg></button>
            <button type="button" aria-label="Up one level"><svg class="block h-[14px] w-[14px]" viewBox="0 0 14 14"><path d="M.5 12.500v-10h4l1 1.500h8v8.500z" fill="#f5ee62" stroke="#332"/><path d="M5 10h5M5 10V6M3 8l2-2 2 2" fill="none" stroke="#000" stroke-width="1.200"/></svg></button>
            <button type="button" aria-label="New folder"><svg class="block h-[14px] w-[14px]" viewBox="0 0 14 14"><path d="M.5 12.500v-8h3l1 1.500h5v6.500z" fill="#f5ee62" stroke="#332"/><path d="M11 1v6M8 4h6M9 2l4 4M13 2 9 6" stroke="#555" stroke-width=".8"/></svg></button>
            <button type="button" class="flex items-center gap-px" aria-label="View menu"><svg class="block h-[14px] w-[15px]" viewBox="0 0 15 14"><path d="M.5 1.500h14v11H.5z" fill="#fff" stroke="#223"/><path d="M1 2h13v2H1z" fill="#1c3080"/><path d="M2 6h3M2 8.500h3M2 11h3M6 6h3M6 8.500h3M6 11h3M10 6h3M10 8.500h3M10 11h3" stroke="#445" stroke-width=".9"/></svg><svg class="h-[6px] w-[9px]"><use href="#down"/></svg></button>
          </div>
        </div>
        <div class="flex min-h-0 flex-1">
          <nav class="flex w-[111px] shrink-0 flex-col items-center gap-[2px] pt-[1px] text-center">
            <button type="button" class="flex h-[51px] w-full flex-col items-center"><svg class="h-[38px] w-[36px] shrink-0" viewBox="0 0 36 38"><path d="M8 29l9-6 17 4-8 8-17-2z" fill="#b5b8bb" stroke="#808489" stroke-width=".7"/><path d="M11 28l8-4 11 3-7 4z" fill="#6ec0ea"/><circle cx="10" cy="13" r="8" fill="#dde4e9" stroke="#a9b3ba" stroke-width="1.500"/><path d="M10 7v6h-4" stroke="#668" fill="none"/><path d="M17 10l12 2v14l-11-3z" fill="#fbfbfb" stroke="#b5bcc2"/><path d="M19 13l4 1M19 16l4 1M24 14h3v5h-3z" stroke="#4a9ad0" fill="#58a8dc" stroke-width=".8"/></svg><span>Recent places</span></button>
            <button type="button" class="flex h-[52px] w-full flex-col items-center justify-end"><svg class="mb-[2px] h-[28px] w-[34px]" viewBox="0 0 34 28"><path d="M.5 1.500h33v25H.5z" fill="#c5ccd4" stroke="#8b95a0"/><path d="M3 4h28v20H3z" fill="url(#gBlue)"/><path d="M3 4h28L3 20z" fill="#3f80dd" opacity=".6"/><path d="M3 21.500h28V24H3z" fill="#2a4872"/></svg><span>Desktop</span></button>
            <button type="button" class="flex h-[52px] w-full flex-col items-center justify-end"><svg class="mb-[1px] h-[36px] w-[36px]" viewBox="0 0 36 36"><path d="M2 4l2-2h6l2 2 22 2v28H2z" fill="#e9bf5c" stroke="#c0923a" stroke-width=".7"/><path d="M7 4h3M15 6h3M24 8h4" stroke="#fff" stroke-width="4"/><path d="M7 4h2" stroke="#2a3" stroke-width="2.500"/><path d="M15 6h2" stroke="#d33" stroke-width="2.500"/><path d="M24 8h2" stroke="#37c" stroke-width="2.500"/><path d="M2 9l10 1 22 2v22H2z" fill="#f8dc8e"/><path d="M5 22c0-2 1-3 3-3h20c2 0 3 1 3 3v12h-6v-8H11v8H5z" fill="#8ecdf0" stroke="#5a9fc8" stroke-width=".7"/></svg><span>Libraries</span></button>
            <button type="button" class="flex h-[52px] w-full flex-col items-center justify-end"><svg class="mb-[4px] h-[30px] w-[34px]" viewBox="0 0 34 30"><path d="M2 8l6-2v16l-6-2z" fill="#c4c9cd" stroke="#8a9095" stroke-width=".7"/><use href="#monitor" x="7" y="0" width="27" height="30"/></svg><span>This PC</span></button>
            <button type="button" class="flex h-[52px] w-full flex-col items-center justify-end"><svg class="mb-[1px] h-[36px] w-[36px]" viewBox="0 0 36 36"><circle cx="15" cy="15" r="13.500" fill="#2a70c8"/><path d="M5 7c5-5 8-5 12-5l-3 6 4 4-6 4-5 6C3 18 1 12 5 7zM20 4c5 1 7 5 8 9l-7-2z" fill="#4ab548"/><path d="M9 4c4-2 8-2 12 0l-5 3z" fill="#b7e4b0" opacity=".7"/><use href="#monitor" x="12" y="10" width="24" height="26"/></svg><span>Network</span></button>
          </nav>
          <div class="flex min-w-0 flex-1 flex-col">
            <div class="flex h-[332px] flex-col bg-[linear-gradient(90deg,transparent_363px,#ececec_363px,#ececec_364px,transparent_364px,transparent_524px,#ececec_524px,#ececec_525px,transparent_525px)] bg-[#fdfdfd] font-['Open_Sans','Noto_Sans',sans-serif] text-xs leading-4">
              <svg class="ml-[177px] h-1 w-[8px] shrink-0 self-start" viewBox="0 0 8 4"><path d="M0 4 4 0l4 4z" fill="#4a90ac"/></svg>
              <table class="w-full table-fixed border-collapse text-left">
                <thead><tr class="h-[18px]"><th class="w-[363px] p-0 pl-[6px] font-normal">Name</th><th class="p-0 pl-[5px] font-normal">Date modified</th></tr></thead>
                <tbody><tr class="h-[22px]">
                  <td class="p-0 pl-[3px]"><span class="flex h-[20px] items-center gap-[2px] border-y border-l border-[#2a89b0] bg-[#c6e3f2] pl-[2px]"><svg class="h-[17px] w-[17px]"><use href="#nx"/></svg>Hull_New</span></td>
                  <td class="p-0"><span class="flex h-[20px] items-center border-y border-[#2a89b0] bg-[#c6e3f2] pl-[5px]">12/10/2014 16:30</span></td></tr></tbody>
              </table>
            </div>
            <div class="flex h-[17px] items-center justify-between bg-[#ededed] text-black"><span class="grid w-[18px] place-items-center"><svg class="h-[9px] w-[7px]" viewBox="0 0 7 9"><path d="M6 1 2 4.500 6 8" fill="none" stroke="#444" stroke-width="1.600"/></svg></span><span class="h-[17px] w-[330px] bg-[#bbb]"></span><span class="flex-1"></span><span class="grid h-[17px] w-[17px] place-items-center bg-[#d8d8d8]"><svg class="h-[9px] w-[7px]" viewBox="0 0 7 9"><path d="M1 1l4 3.500L1 8" fill="none" stroke="#000" stroke-width="2"/></svg></span></div>
            <div class="mt-[10px] flex flex-col gap-1">
              <div class="flex items-center"><label for="fname" class="w-[110px] pl-[2px]">File name:</label><span class="flex h-[21px] w-[295px] border-2 border-t-[#777] border-r-[#888] border-b-[#ccc] border-l-[#777] bg-white"><input id="fname" value="Hull_New" class="min-w-0 flex-1 bg-transparent outline-none"><span class="grid w-[17px] place-items-center border border-t-white border-r-[#777] border-b-[#777] border-l-white bg-[#eaeaea]"><svg class="h-[6px] w-[10px]"><use href="#down"/></svg></span></span><span class="flex-1"></span><button type="submit" class="h-6 w-[86px] border border-t-[#888] border-r-2 border-r-[#555] border-b-2 border-b-[#555] border-l-[#888] bg-[#ededed] pl-[3px]">OK</button></div>
              <div class="flex items-center"><label for="ftype" class="w-[110px] pl-[2px]">Files of type:</label><span class="flex h-[20px] w-[295px] border-2 border-t-[#777] border-r-[#888] border-b-[#ccc] border-l-[#777] bg-white"><select id="ftype" class="min-w-0 flex-1 appearance-none bg-transparent pl-px outline-none"><option>Part Files (*.prt)</option></select><span class="grid w-[17px] place-items-center border border-t-white border-r-[#777] border-b-[#777] border-l-white bg-[#eaeaea]"><svg class="h-[6px] w-[10px]"><use href="#down"/></svg></span></span><span class="flex-1"></span><button type="button" class="h-6 w-[86px] border border-t-white border-r-[#555] border-b-[#555] border-l-white bg-[#ededed]">Cancel</button></div>
            </div>
          </div>
          <div class="w-[226px] shrink-0 pl-[7px]">
            <svg class="block h-[158px] w-[211px] border border-t-[#888] border-r-white border-b-white border-l-[#888] bg-[#c9cacc]" viewBox="723 217 633 473">
              <g stroke="#1b2730" stroke-width="3" stroke-linejoin="round">
                <path d="M935 382 1346 572v8L1155 637 890 403z" fill="#98c4e0"/>
                <path d="M935 268 1346 457v115L935 382z" fill="#4e6573"/>
                <path d="M925 393 1335 582" stroke-width="2" fill="none"/>
                <path d="M733 332 1145 518v110L733 450z" fill="#4e6573"/>
                <path d="M760 460 1155 637l-10-9z" fill="#33434d"/>
              </g>
              <path d="M935 268V382l-10 10-33 11M733 332v112l6 8" fill="none" stroke="#3a4ae8" stroke-width="4"/>
            </svg>
            <label class="mt-[12px] flex items-center gap-[5px]"><span class="grid place-items-center"><input type="checkbox" checked class="col-start-1 row-start-1 h-[13px] w-[13px] appearance-none border-2 border-t-[#777] border-r-[#ddd] border-b-[#ddd] border-l-[#777] bg-white"><svg class="pointer-events-none col-start-1 row-start-1 h-[8px] w-[8px]"><use href="#tickBlack"/></svg></span>Preview</label>
          </div>
        </div>
        <div class="flex items-end justify-between">
          <div class="flex flex-col items-start gap-[13px] pb-[2px] pl-[6px]">
            <label class="flex items-center gap-[5px]"><input type="checkbox" class="h-[13px] w-[13px] appearance-none border-2 border-t-[#777] border-r-[#ddd] border-b-[#ddd] border-l-[#777] bg-white">Load Structure Only</label>
            <label class="flex items-center gap-[5px]"><span class="grid place-items-center"><input type="checkbox" checked class="col-start-1 row-start-1 h-[13px] w-[13px] appearance-none border-2 border-t-[#777] border-r-[#ddd] border-b-[#ddd] border-l-[#777] bg-white"><svg class="pointer-events-none col-start-1 row-start-1 h-[8px] w-[8px]"><use href="#tickBlack"/></svg></span>Use Partial Loading</label>
            <label class="flex items-center gap-[5px]"><input type="checkbox" class="h-[13px] w-[13px] appearance-none border-2 border-t-[#777] border-r-[#ddd] border-b-[#ddd] border-l-[#777] bg-white">Use Lightweight Representations</label>
            <button type="button" class="-mt-[8px] h-[27px] w-[89px] border border-t-white border-r-2 border-r-[#777] border-b-2 border-b-[#777] border-l-white bg-[#ededed]">Options...</button>
          </div>
          <svg class="h-[12px] w-[12px]" viewBox="0 0 12 12"><path d="M0 12 12 0M4 12l8-8M8 12l4-4" stroke="#888" stroke-width="1.300"/></svg>
        </div>
      </div>
      <svg class="pointer-events-none absolute top-[436px] left-[618px] h-[18px] w-[12px]" viewBox="0 0 12 18"><path d="M1 1v13l3-3 2.500 5.500 2-1L6 10.500h4.500z" fill="#fff" stroke="#222"/></svg>
    </form>
  </main>

  <footer class="flex h-[19px] shrink-0 items-center border-t border-b-2 border-t-[#f4f4f4] border-b-[#f0f0f0] bg-[#d3d3d3] font-bold text-black">
    <span class="w-[634px] pl-[2px]">Choose file to open</span><span class="flex-1">Building File Selection Dialog</span>
    <span class="h-4 w-[18px] border-l border-[#eee]"></span><span class="h-4 w-[29px] border-l border-[#eee]"></span>
    <span class="flex items-center gap-1 border-l border-[#eee] pr-[9px] pl-[3px]"><svg class="h-[14px] w-[14px]" viewBox="0 0 14 14"><path d="M0 0h14v14H0z" fill="#7f8f99"/><path d="M2 4l3 5 2-5 2 6 3-6M3 10l8-1" stroke="#66606a" fill="none"/></svg><svg class="h-[14px] w-[14px]" viewBox="0 0 14 14"><path d="M1 4V1h3M10 1h3v3M13 10v3h-3M4 13H1v-3" stroke="#fff" fill="none"/><path d="M3 3h8v8H3z" fill="#e9eef4" stroke="#444"/><path d="M5 5h4v4H5z" fill="#2f7ad8"/></svg></span>
  </footer>
</div>
</body>
</html>
